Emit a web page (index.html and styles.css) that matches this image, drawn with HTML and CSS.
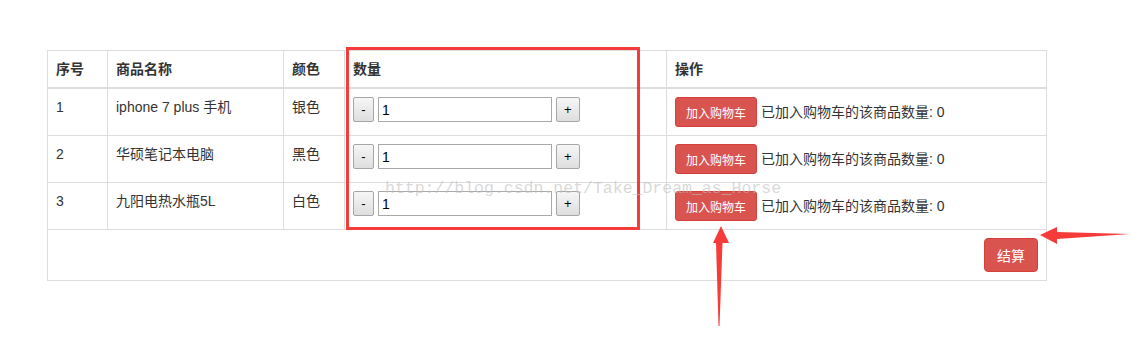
FILE: index.html
```
<!DOCTYPE html>
<html lang="zh">
  <head>
    <meta charset="UTF-8" />
    <title>购物车</title>
    <link rel="stylesheet" href="styles.css">
  </head>
  <body>
    <div class="mainDiv">
      <table class="cartTable">
        <thead>
          <tr>
            <th class="colNo">序号</th>
            <th class="colName">商品名称</th>
            <th class="colColor">颜色</th>
            <th class="colQty">数量</th>
            <th>操作</th>
          </tr>
        </thead>
        <tbody>
          <tr>
            <td>1</td>
            <td>iphone 7 plus 手机</td>
            <td>银色</td>
            <td>
              <button class="stepButton minus">-</button>
              <input class="qtyInput" type="text" value="1" />
              <button class="stepButton plus">+</button>
            </td>
            <td>
              <button class="cartButton">加入购物车</button>
              <span>已加入购物车的该商品数量: 0</span>
            </td>
          </tr>
          <tr>
            <td>2</td>
            <td>华硕笔记本电脑</td>
            <td>黑色</td>
            <td>
              <button class="stepButton minus">-</button>
              <input class="qtyInput" type="text" value="1" />
              <button class="stepButton plus">+</button>
            </td>
            <td>
              <button class="cartButton">加入购物车</button>
              <span>已加入购物车的该商品数量: 0</span>
            </td>
          </tr>
          <tr>
            <td>3</td>
            <td>九阳电热水瓶5L</td>
            <td>白色</td>
            <td>
              <button class="stepButton minus">-</button>
              <input class="qtyInput" type="text" value="1" />
              <button class="stepButton plus">+</button>
            </td>
            <td>
              <button class="cartButton">加入购物车</button>
              <span>已加入购物车的该商品数量: 0</span>
            </td>
          </tr>
          <tr>
            <td colspan="5" class="footCell">
              <button class="payButton">结算</button>
            </td>
          </tr>
        </tbody>
      </table>

      <!-- annotations drawn on top of the screenshot -->
      <div class="highlightBox"></div>
      <div class="watermark">http://blog.csdn.net/Take_Dream_as_Horse</div>
      <svg class="arrows" width="1146" height="358" viewBox="0 0 1146 358">
        <polygon points="721,226 729,243 722.5,243 719.5,326 718.5,326 716,243 713,243" fill="#f63b3b" />
        <polygon points="1040,235 1057,227 1057,232 1130,234 1057,239 1057,244" fill="#f63b3b" />
      </svg>
    </div>
  </body>
</html>
```

FILE: styles.css
```
body {
  margin: 0;
  background-color: #fff;
  font-family: "Liberation Sans", "Noto Sans CJK SC", sans-serif;
  font-size: 14px;
  line-height: 20px;
  color: #333;
}
.mainDiv {
  position: relative;
  width: 1146px;
  height: 358px;
  padding: 50px 0 0 47px;
  box-sizing: border-box;
}
.cartTable {
  width: 1000px;
  border-collapse: collapse;
  border: 1px solid #ddd;
}
.cartTable th,
.cartTable td {
  border: 1px solid #ddd;
  padding: 8px;
  text-align: left;
  vertical-align: top;
}
.cartTable th {
  font-weight: bold;
  border-bottom-width: 2px;
}
.colNo {
  width: 43px;
}
.colName {
  width: 159px;
}
.colColor {
  width: 44px;
}
.colQty {
  width: 305px;
}
.stepButton {
  height: 25px;
  margin: 0;
  padding: 0;
  font-family: "Liberation Sans", sans-serif;
  font-size: 13px;
  color: #000;
  border: 1px solid #a6a6a6;
  border-radius: 2px;
  background: linear-gradient(#f6f6f6, #dedede);
  vertical-align: top;
}
.minus {
  width: 21px;
}
.plus {
  width: 24px;
}
.qtyInput {
  width: 174px;
  height: 25px;
  margin: 0;
  padding: 0 3px;
  box-sizing: border-box;
  border: 1px solid #a9a9a9;
  font-family: "Liberation Sans", sans-serif;
  font-size: 14px;
  color: #000;
  vertical-align: top;
}
.cartButton {
  height: 30px;
  width: 82px;
  padding: 0;
  font-family: "Liberation Sans", "Noto Sans CJK SC", sans-serif;
  font-size: 12px;
  color: #fff;
  background-color: #d9534f;
  border: 1px solid #d43f3a;
  border-radius: 3px;
  vertical-align: top;
}
.cartButton + span {
  display: inline-block;
  line-height: 30px;
}
.footCell {
  text-align: right !important;
  height: 34px;
}
.payButton {
  height: 34px;
  width: 54px;
  padding: 0;
  font-family: "Liberation Sans", "Noto Sans CJK SC", sans-serif;
  font-size: 14px;
  color: #fff;
  background-color: #d9534f;
  border: 1px solid #d43f3a;
  border-radius: 4px;
}
.highlightBox {
  position: absolute;
  left: 346px;
  top: 47px;
  width: 288px;
  height: 177px;
  border: 3px solid #f63b3b;
}
.watermark {
  position: absolute;
  left: 385px;
  top: 179px;
  font-family: "Liberation Mono", monospace;
  font-size: 16.5px;
  line-height: 20px;
  color: rgba(190, 190, 190, 0.6);
}
.arrows {
  position: absolute;
  left: 0;
  top: 0;
}
```
